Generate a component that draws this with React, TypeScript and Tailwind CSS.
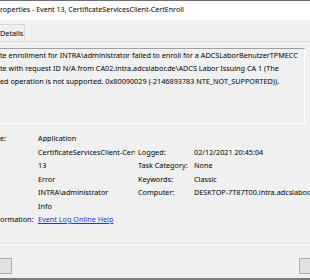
import React from 'react';

const rows = [
  { label: 'e:', value: 'Application', rLabel: '', rValue: '' },
  { label: '', value: 'CertificateServicesClient-CertEnroll', rLabel: 'Logged:', rValue: '02/12/2021 20:45:04' },
  { label: '', value: '13', rLabel: 'Task Category:', rValue: 'None' },
  { label: '', value: 'Error', rLabel: 'Keywords:', rValue: 'Classic' },
  { label: '', value: 'INTRA\\administrator', rLabel: 'Computer:', rValue: 'DESKTOP-7T87T00.intra.adcslabor.de' },
  { label: '', value: 'Info', rLabel: '', rValue: '' },
];

export default function App() {
  return (
    <div className="w-[310px] h-[280px] overflow-hidden bg-[#f0f0f0] flex flex-col font-['Noto_Sans',sans-serif] text-[7.25px] leading-none text-black">
      {/* title bar */}
      <div className="h-[20px] shrink-0 bg-white border-t border-[#6e6e6e] flex items-center whitespace-nowrap text-[7.1px] pb-[1px]">
        roperties - Event 13, CertificateServicesClient-CertEnroll
      </div>

      {/* tabs */}
      <div className="mt-[4px] h-[17px] shrink-0 flex">
        <div className="w-[25px] border-r border-t border-[#d9d9d9] flex items-center whitespace-nowrap pt-[1px]">Details</div>
      </div>

      <div className="flex-1 border-t border-[#d9d9d9] flex flex-col">
        {/* description box */}
        <div className="mt-[6px] mr-[5px] h-[76px] shrink-0 border-t border-[#a0a0a0] border-r border-b border-r-white border-b-white flex flex-col whitespace-nowrap overflow-hidden">
          <div className="h-[13px] flex items-center">te enrollment for INTRA\administrator failed to enroll for a ADCSLaborBenutzerTPMECC</div>
          <div className="h-[13px] flex items-center">te with request ID N/A from CA02.intra.adcslabor.de\ADCS Labor Issuing CA 1 (The</div>
          <div className="h-[13px] flex items-center">ed operation is not supported. 0x80090029 (-2146893783 NTE_NOT_SUPPORTED)).</div>
        </div>

        {/* fields */}
        <div className="mt-[8px] flex flex-col">
          {rows.map((r, i) => (
            <div key={i} className="h-[13.5px] flex items-center whitespace-nowrap">
              <div className="w-[38px] shrink-0">{r.label}</div>
              <div className="w-[97px] shrink-0 overflow-hidden">{r.value}</div>
              <div className="w-[3px] shrink-0" />
              <div className="w-[56px] shrink-0">{r.rLabel}</div>
              <div className="flex-1 overflow-hidden">{r.rValue}</div>
            </div>
          ))}
          <div className="h-[13.5px] flex items-center whitespace-nowrap">
            <div className="w-[38px] shrink-0">ormation:</div>
            <a href="#" className="text-[#1a3ad8] underline">Event Log Online Help</a>
          </div>
        </div>

        {/* separator */}
        <div className="mt-[16px] h-[2px] shrink-0 border-t border-[#e3e3e3] bg-white" />

        {/* buttons */}
        <div className="mt-[13px] h-[16px] shrink-0 flex justify-between">
          <div className="w-[12px] bg-[#e1e1e1] border-t border-r border-b border-[#adadad]" />
          <div className="w-[11px] bg-[#e1e1e1] border-t border-l border-b border-[#adadad]" />
        </div>

        <div className="flex-1" />
        <div className="h-[2px] shrink-0 bg-[#7a7a7a]" />
      </div>
    </div>
  );
}
